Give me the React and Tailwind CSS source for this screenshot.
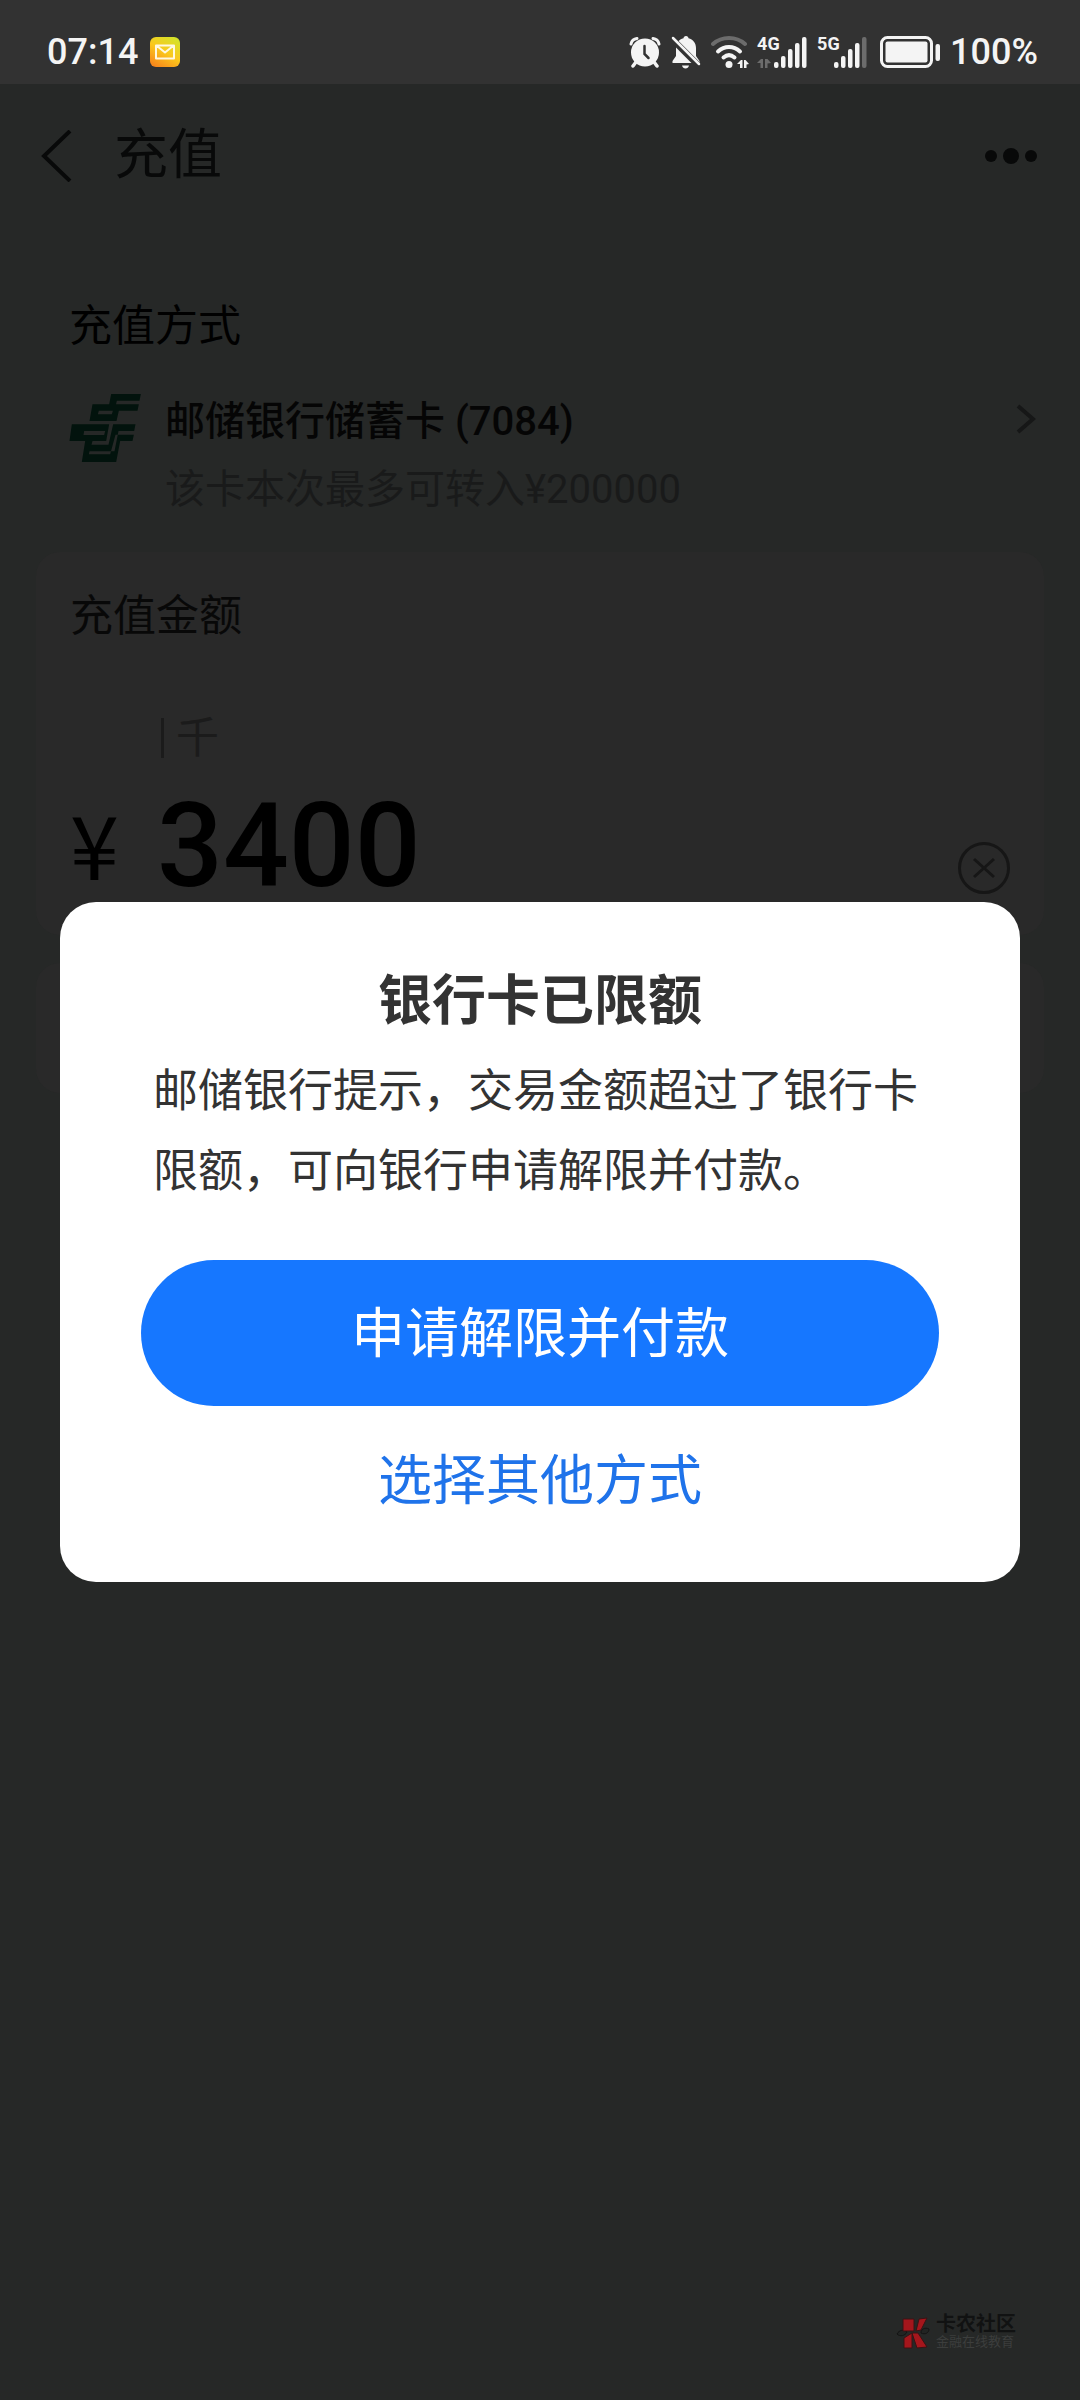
import React from 'react';

const MailBadge = () => (
    <svg viewBox="0 0 30 30" className="h-[30px] w-[30px]" aria-hidden="true">
        <defs>
            <linearGradient id="mail-bg" x1="0.2" y1="1" x2="0.8" y2="0">
                <stop offset="0" stopColor="#f7861c" />
                <stop offset="0.5" stopColor="#fbc81c" />
                <stop offset="1" stopColor="#d3e32a" />
            </linearGradient>
        </defs>
        <rect width="30" height="30" rx="6" fill="url(#mail-bg)" />
        <path d="M6 8.5h18v13H6zM7 9l8 6.5L23 9" fill="none" stroke="#fff8e0" strokeWidth="2" strokeLinejoin="round" />
    </svg>
);

const AlarmIcon = () => (
    <svg viewBox="0 0 32 32" className="h-8 w-8" aria-hidden="true">
        <path d="M2 8A7 7 0 0 1 8 2.500M30 8A7 7 0 0 0 24 2.500" fill="none" stroke="#f4f4f4" strokeWidth="3" strokeLinecap="round" />
        <path d="M7 26l-3 4M25 26l3 4" stroke="#f4f4f4" strokeWidth="3.500" strokeLinecap="round" />
        <circle cx="16" cy="16.500" r="14" fill="#f4f4f4" />
        <path d="M15.500 10v8l4 4" fill="none" stroke="#323232" strokeWidth="2.500" strokeLinecap="round" />
    </svg>
);

const BellOffIcon = () => (
    <svg viewBox="0 0 30 34" className="h-[34px] w-[30px]" aria-hidden="true">
        <path d="M15 1c1.500 0 2.500 1 2.500 2.300C22 4.500 25 8 25 13v8l3.500 5v2H1.500v-2L5 21v-8c0-5 3-8.500 7.500-9.700C12.500 2 13.500 1 15 1z" fill="#f4f4f4" />
        <path d="M11 30.500h7c-.5 2-1.800 3-3.500 3s-3-1-3.500-3z" fill="#f4f4f4" />
        <path d="M-1 2l30 30" stroke="#323232" strokeWidth="6.500" />
        <path d="M2 3l26 26" stroke="#f4f4f4" strokeWidth="2.500" strokeLinecap="round" />
    </svg>
);

const WifiIcon = () => (
    <svg viewBox="0 0 38 34" className="-mr-0.5 h-[34px] w-[38px]" aria-hidden="true">
        <g fill="none" strokeWidth="4" strokeLinecap="round">
            <path d="M2 9C11 1 25 1 34 9" stroke="#6c6c6c" />
            <path d="M7 16.500c6.500-6 15.500-6 22 0" stroke="#f4f4f4" />
            <path d="M12.500 22.500c3.500-3 7.500-3 11 0" stroke="#f4f4f4" />
        </g>
        <circle cx="18" cy="29.500" r="3.500" fill="#f4f4f4" />
        <path d="M26 29l4-4h1.500v8h-2.500v-4zM33 25h1.500l3.500 4-2.500.5V33H33z" fill="#f4f4f4" />
    </svg>
);

const Signal = ({ label, weak }) => (
    <div className="flex h-8">
        <div className="flex w-4 flex-col justify-between">
            <span className="font-['Liberation_Sans_Narrow','Roboto'] text-[18px] leading-4 font-bold">{label}</span>
            <svg viewBox="0 0 14 9" className="h-[9px] w-[14px]" aria-hidden="true">
                {!weak && <path d="M0 4l4-4h2v9H3.500V4zM8 0h2.500L14 4l-3.500.5V9H8z" fill="#6c6c6c" />}
            </svg>
        </div>
        <svg viewBox="0 0 34 32" className="h-8 w-[34px]" aria-hidden="true">
            <g fill="#f4f4f4">
                <rect x="1" y="26" width="4.500" height="6" rx="2" />
                <rect x="8" y="20" width="4.500" height="12" rx="2" />
                <rect x="15" y="13" width="4.500" height="19" rx="2" />
                <rect x="22" y="7" width="4.500" height="25" rx="2" />
                <rect x="29" y="1" width="4.500" height="31" rx="2" fill={weak ? '#6c6c6c' : '#f4f4f4'} />
            </g>
        </svg>
    </div>
);

const BatteryIcon = () => (
    <svg viewBox="0 0 60 32" className="ml-[3px] h-8 w-[60px]" aria-hidden="true">
        <rect x="1.500" y="1.500" width="50" height="29" rx="6" fill="none" stroke="#f4f4f4" strokeWidth="3" />
        <rect x="5.500" y="5.500" width="42" height="21" rx="2" fill="#f4f4f4" />
        <rect x="55.500" y="8" width="4.500" height="17" rx="2" fill="#f4f4f4" />
    </svg>
);

const PostBankLogo = () => (
    <svg viewBox="117 342 215 204" className="mt-1 h-[68px] w-[72px] shrink-0" fill="#02130d" aria-hidden="true">
        <path d="M243 342H332L328 362H260L253 392H206L203 403H245L254 373H326L322 392H266L259 423H178L187 373H237Z" />
        <path
            fillRule="evenodd"
            d="M125 433H237L228 483H187L184 494H235L249 433H316L312 453H265L253 514H178L176 523H240L256 464H311L307 483H270L258 546H155L165 483H118ZM162 453L160 465H222L225 453Z"
        />
    </svg>
);

const StatusBar = () => (
    <div className="flex h-[84px] items-center justify-between bg-[#323232] pt-5 pr-[42px] pl-[47px] text-[#f4f4f4]">
        <div className="flex items-center gap-3">
            <span className="text-4xl leading-10 font-medium">07:14</span>
            <MailBadge />
        </div>
        <div className="flex items-center gap-[10px]">
            <AlarmIcon />
            <BellOffIcon />
            <WifiIcon />
            <Signal label="4G" />
            <Signal label="5G" weak />
            <BatteryIcon />
            <span className="text-4xl leading-10 font-medium">100%</span>
        </div>
    </div>
);

const TopBar = () => (
    <header className="flex h-36 items-center justify-between pr-[42px] pl-10 text-[#080909]">
        <div className="flex items-center gap-[42px]">
            <button type="button" aria-label="返回">
                <svg viewBox="0 0 32 52" className="h-[52px] w-8" fill="none" stroke="currentColor" strokeWidth="4">
                    <path d="M30 1L4 26l26 25" />
                </svg>
            </button>
            <h1 className="text-[54px] leading-[60px]">充值</h1>
        </div>
        <button type="button" aria-label="更多">
            <svg viewBox="0 0 54 16" className="h-4 w-[54px]" fill="currentColor">
                <circle cx="7" cy="8" r="6" />
                <circle cx="27" cy="8" r="8" />
                <circle cx="47" cy="8" r="6" />
            </svg>
        </button>
    </header>
);

const PayMethod = () => (
    <section className="pt-[66px] pr-[44px] pl-[69px]">
        <h2 className="text-[43px] leading-[64px] text-black">充值方式</h2>
        <button type="button" className="mt-8 flex w-full items-start text-left">
            <PostBankLogo />
            <span className="ml-6 flex-1">
                <span className="block text-[40px] leading-[64px] font-medium text-[#050505]">邮储银行储蓄卡 (7084)</span>
                <span className="block pt-1 text-[40px] leading-[64px] text-[#191a1a]">该卡本次最多可转入¥200000</span>
            </span>
            <svg viewBox="0 0 20 30" className="mt-[14px] h-[30px] w-5" fill="none" stroke="#161717" strokeWidth="4" aria-hidden="true">
                <path d="M2 2l15 13L2 28" />
            </svg>
        </button>
    </section>
);

const AmountCard = () => (
    <section className="mx-9 mt-[30px] h-[383px] rounded-3xl bg-[#292929] px-[34px] pt-8">
        <label htmlFor="amount" className="block text-[43px] leading-[64px] text-[#080808]">
            充值金额
        </label>
        <div className="mt-[66px] ml-[91px] flex items-center gap-3 text-[#1b1b1b]">
            <span className="h-10 w-[3px] bg-[#1b1b1b]"></span>
            <span className="text-[43px] leading-[48px]">千</span>
        </div>
        <div className="mt-6 flex items-end text-black">
            <span className="w-[87px] pb-3 font-['Noto_Sans_CJK_SC',sans-serif] text-[88px] leading-[104px]">¥</span>
            <input
                id="amount"
                defaultValue="3400"
                className="h-[120px] min-w-0 flex-1 bg-transparent text-[116px] leading-[120px] font-medium outline-none"
            />
            <button type="button" aria-label="清除" className="pb-3">
                <svg viewBox="0 0 52 52" className="h-[52px] w-[52px]" fill="none" stroke="#161616" strokeWidth="3">
                    <circle cx="26" cy="26" r="24.500" />
                    <path d="M16 17l20 18M36 17L16 35" />
                </svg>
            </button>
        </div>
    </section>
);

const Watermark = () => (
    <footer className="mt-auto mr-16 mb-[50px] flex items-center gap-1 self-end">
        <svg viewBox="0 0 36 36" className="h-9 w-9" aria-hidden="true">
            <path d="M1 20c2-4 7-5 10-2-2 4-7 5-10 2zM33 15c-4-2-8 0-8 4 4 2 8 0 8-4z" fill="#222423" stroke="#141414" />
            <path d="M7 5h11v12H7zM23 5l8-1-6 12-5 1zM8 34V24l8-5v15zM16 19h6l9 14-10 1z" fill="#a5161c" stroke="#3a1214" />
        </svg>
        <div>
            <p className="text-[20px] leading-5 font-bold text-[#111212]">卡农社区</p>
            <p className="text-[13px] leading-4 text-[#3c3e3d]">金融在线教育</p>
        </div>
    </footer>
);

const LimitDialog = () => (
    <div className="fixed inset-x-0 top-[84px] bottom-0 flex items-center justify-center px-[60px]">
        <div
            role="dialog"
            aria-modal="true"
            aria-labelledby="limit-title"
            className="w-full rounded-[36px] bg-white px-[81px] py-16 text-center"
        >
            <h2 id="limit-title" className="text-[54px] leading-[72px] font-bold text-[#333333]">
                银行卡已限额
            </h2>
            <p className="mt-[14px] px-3 text-left text-[45px] leading-[80px] text-[#333333]">
                邮储银行提示，交易金额超过了银行卡限额，可向银行申请解限并付款。
            </p>
            <button type="button" className="mt-12 h-[146px] w-full rounded-full bg-[#1677ff] pt-1 text-[54px] leading-[72px] text-white">
                申请解限并付款
            </button>
            <button type="button" className="mt-10 block w-full text-[54px] leading-[72px] text-[#1f73ea]">
                选择其他方式
            </button>
        </div>
    </div>
);

const App = () => {
    return (
        <div
            lang="zh-CN"
            className="flex min-h-screen flex-col bg-[#262827] font-['Roboto','Noto_Sans_CJK_SC',sans-serif]"
        >
            <StatusBar />
            <TopBar />
            <main>
                <PayMethod />
                <AmountCard />
                <section className="mx-9 mt-7 h-[130px] rounded-3xl bg-[#292929]"></section>
            </main>
            <Watermark />
            <LimitDialog />
        </div>
    );
};

export default App;
